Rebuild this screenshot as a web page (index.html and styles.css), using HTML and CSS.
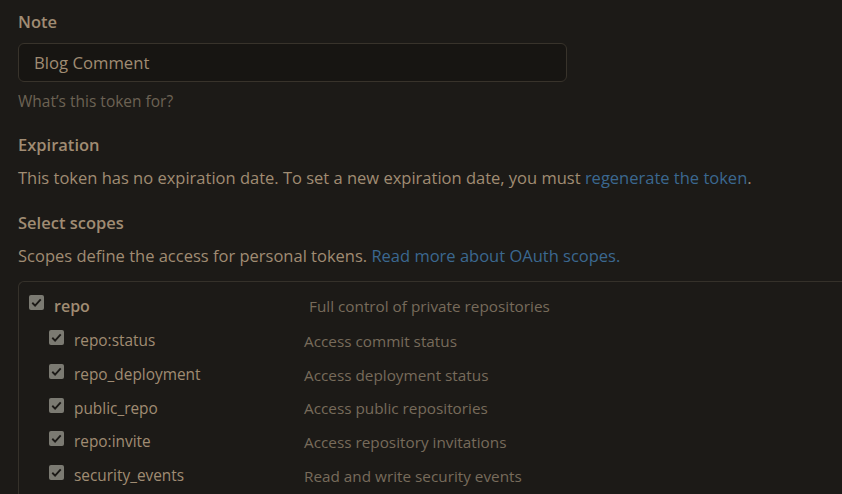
FILE: index.html
```html
<!DOCTYPE html>
<html>
<head>
<meta charset="utf-8">
<link rel="stylesheet" href="styles.css">
</head>
<body>
<div class="page">
  <div class="group">
    <h3 class="label">Note</h3>
    <div class="input">Blog Comment</div>
    <p class="hint">What’s this token for?</p>
  </div>
  <div class="group">
    <h3 class="label">Expiration</h3>
    <p class="text">This token has no expiration date. To set a new expiration date, you must <a class="link">regenerate the token</a>.</p>
  </div>
  <div class="group">
    <h3 class="label">Select scopes</h3>
    <p class="text">Scopes define the access for personal tokens. <a class="link">Read more about OAuth scopes.</a></p>
  </div>
  <div class="scopes">
    <div class="row parent">
      <span class="check"><svg viewBox="0 0 16 16"><path d="M3.5 8.3l3 3 6-6.6" /></svg></span>
      <span class="name">repo</span>
      <span class="desc">Full control of private repositories</span>
    </div>
    <div class="row child">
      <span class="check"><svg viewBox="0 0 16 16"><path d="M3.5 8.3l3 3 6-6.6" /></svg></span>
      <span class="name">repo:status</span>
      <span class="desc">Access commit status</span>
    </div>
    <div class="row child">
      <span class="check"><svg viewBox="0 0 16 16"><path d="M3.5 8.3l3 3 6-6.6" /></svg></span>
      <span class="name">repo_deployment</span>
      <span class="desc">Access deployment status</span>
    </div>
    <div class="row child">
      <span class="check"><svg viewBox="0 0 16 16"><path d="M3.5 8.3l3 3 6-6.6" /></svg></span>
      <span class="name">public_repo</span>
      <span class="desc">Access public repositories</span>
    </div>
    <div class="row child">
      <span class="check"><svg viewBox="0 0 16 16"><path d="M3.5 8.3l3 3 6-6.6" /></svg></span>
      <span class="name">repo:invite</span>
      <span class="desc">Access repository invitations</span>
    </div>
    <div class="row child">
      <span class="check"><svg viewBox="0 0 16 16"><path d="M3.5 8.3l3 3 6-6.6" /></svg></span>
      <span class="name">security_events</span>
      <span class="desc">Read and write security events</span>
    </div>
  </div>
</div>
</body>
</html>
```
FILE: styles.css
```css
html, body {
  margin: 0;
  padding: 0;
  background: #1c1a17;
  overflow: hidden;
}
body {
  font-family: "Open Sans", "Noto Sans", sans-serif;
  color: #a08c73;
  font-size: 16.5px;
}
.page {
  padding: 10px 0 0 18px;
  height: 494px;
  box-sizing: border-box;
  overflow: hidden;
}
.label {
  margin: 0;
  font-size: 16.5px;
  font-weight: 600;
  line-height: 24px;
  color: #a08c73;
}
.input {
  margin-top: 9px;
  width: 517px;
  height: 37px;
  border: 1px solid #38332b;
  border-radius: 6px;
  background: #171512;
  padding: 0 15px;
  line-height: 37px;
  font-size: 16.7px;
  color: #a08c73;
}
.hint {
  margin: 8px 0 0;
  font-size: 15.5px;
  line-height: 22px;
  color: #6c6254;
}
.group + .group {
  margin-top: 21px;
}
.text {
  margin: 9px 0 0;
  line-height: 24px;
}
.link {
  color: #3b6890;
  text-decoration: none;
}
.scopes {
  margin-top: 13px;
  border: 1px solid #35312a;
  border-right: none;
  border-radius: 6px 0 0 6px;
  padding: 9px 0 40px 10px;
}
.row {
  display: flex;
  align-items: center;
  height: 33.7px;
}
.parent {
  height: 29px;
  margin-bottom: 4px;
}
.check {
  width: 15px;
  height: 15px;
  background: #7b7a72;
  border-radius: 2px;
  display: flex;
  flex: none;
}
.check svg {
  width: 15px;
  height: 15px;
  fill: none;
  stroke: #1c1a17;
  stroke-width: 2;
}
.parent .check {
  margin-right: 10px;
  margin-top: -6px;
}
.parent .name {
  font-weight: 600;
  font-size: 16px;
  width: 255px;
}
.child {
  padding-left: 20px;
}
.child .check {
  margin-right: 10px;
  margin-top: -6px;
}
.name {
  width: 230px;
  font-size: 15.4px;
}
.desc {
  font-size: 15.3px;
  color: #776b5b;
}
```
